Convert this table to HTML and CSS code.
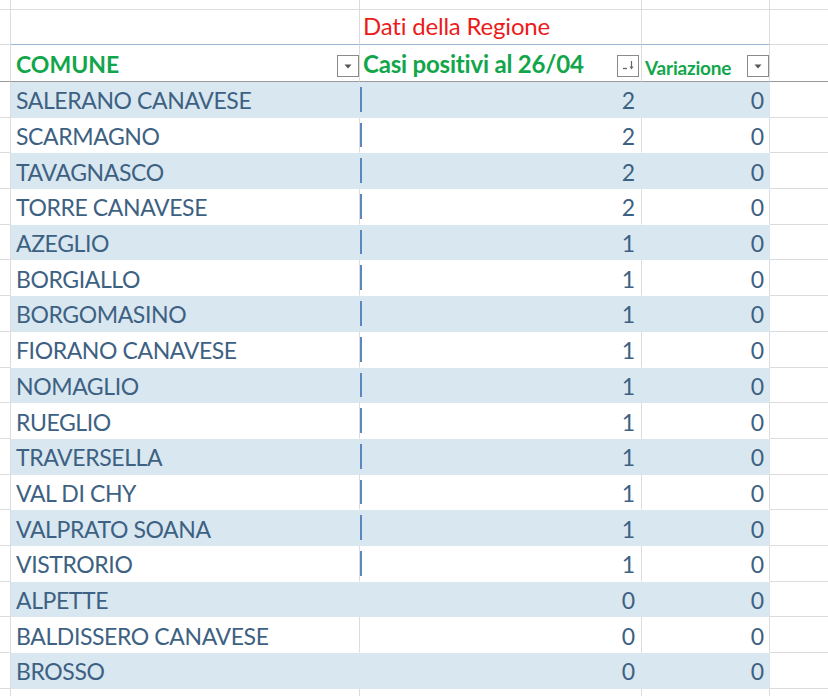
FILE: index.html
```html
<!DOCTYPE html>
<html lang="it">
<head>
<meta charset="utf-8">
<title>Comuni</title>
<link rel="stylesheet" href="styles.css">
</head>
<body>
<div class="sheet">
  <div class="row top">
    <div class="c c0"></div><div class="c ca"></div><div class="c cb"></div><div class="c cc"></div><div class="c cd"></div>
  </div>
  <div class="row title">
    <div class="c c0"></div><div class="c ca"></div>
    <div class="c cb"><span class="red">Dati della Regione</span></div>
    <div class="c cc"></div><div class="c cd"></div>
  </div>
  <div class="row head">
    <div class="c c0"></div>
    <div class="c ca"><span class="h1">COMUNE</span><span class="btn"><svg width="20" height="20" viewBox="0 0 20 20"><path d="M6.5 8.5h7l-3.5 4z" fill="#555"/></svg></span></div>
    <div class="c cb"><span class="h2">Casi positivi al 26/04</span><span class="btn sort"><svg width="20" height="20" viewBox="0 0 20 20"><path d="M5 12.5h4" stroke="#666" stroke-width="1.3" fill="none"/><path d="M13.5 5v7.5" stroke="#666" stroke-width="1.2" fill="none"/><path d="M11.5 10.5l2 3 2-3z" fill="#666"/></svg></span></div>
    <div class="c cc"><span class="h3">Variazione</span><span class="btn"><svg width="20" height="20" viewBox="0 0 20 20"><path d="M6.5 8.5h7l-3.5 4z" fill="#555"/></svg></span></div>
    <div class="c cd"></div>
  </div>

  <div class="row data band"><div class="c c0"></div><div class="c ca">SALERANO CANAVESE</div><div class="c cb"><i class="bar"></i><span>2</span></div><div class="c cc">0</div><div class="c cd"></div></div>
  <div class="row data"><div class="c c0"></div><div class="c ca">SCARMAGNO</div><div class="c cb"><i class="bar"></i><span>2</span></div><div class="c cc">0</div><div class="c cd"></div></div>
  <div class="row data band"><div class="c c0"></div><div class="c ca">TAVAGNASCO</div><div class="c cb"><i class="bar"></i><span>2</span></div><div class="c cc">0</div><div class="c cd"></div></div>
  <div class="row data"><div class="c c0"></div><div class="c ca">TORRE CANAVESE</div><div class="c cb"><i class="bar"></i><span>2</span></div><div class="c cc">0</div><div class="c cd"></div></div>
  <div class="row data band"><div class="c c0"></div><div class="c ca">AZEGLIO</div><div class="c cb"><i class="bar"></i><span>1</span></div><div class="c cc">0</div><div class="c cd"></div></div>
  <div class="row data"><div class="c c0"></div><div class="c ca">BORGIALLO</div><div class="c cb"><i class="bar"></i><span>1</span></div><div class="c cc">0</div><div class="c cd"></div></div>
  <div class="row data band"><div class="c c0"></div><div class="c ca">BORGOMASINO</div><div class="c cb"><i class="bar"></i><span>1</span></div><div class="c cc">0</div><div class="c cd"></div></div>
  <div class="row data"><div class="c c0"></div><div class="c ca">FIORANO CANAVESE</div><div class="c cb"><i class="bar"></i><span>1</span></div><div class="c cc">0</div><div class="c cd"></div></div>
  <div class="row data band"><div class="c c0"></div><div class="c ca">NOMAGLIO</div><div class="c cb"><i class="bar"></i><span>1</span></div><div class="c cc">0</div><div class="c cd"></div></div>
  <div class="row data"><div class="c c0"></div><div class="c ca">RUEGLIO</div><div class="c cb"><i class="bar"></i><span>1</span></div><div class="c cc">0</div><div class="c cd"></div></div>
  <div class="row data band"><div class="c c0"></div><div class="c ca">TRAVERSELLA</div><div class="c cb"><i class="bar"></i><span>1</span></div><div class="c cc">0</div><div class="c cd"></div></div>
  <div class="row data"><div class="c c0"></div><div class="c ca">VAL DI CHY</div><div class="c cb"><i class="bar"></i><span>1</span></div><div class="c cc">0</div><div class="c cd"></div></div>
  <div class="row data band"><div class="c c0"></div><div class="c ca">VALPRATO SOANA</div><div class="c cb"><i class="bar"></i><span>1</span></div><div class="c cc">0</div><div class="c cd"></div></div>
  <div class="row data"><div class="c c0"></div><div class="c ca">VISTRORIO</div><div class="c cb"><i class="bar"></i><span>1</span></div><div class="c cc">0</div><div class="c cd"></div></div>
  <div class="row data band"><div class="c c0"></div><div class="c ca">ALPETTE</div><div class="c cb"><span>0</span></div><div class="c cc">0</div><div class="c cd"></div></div>
  <div class="row data"><div class="c c0"></div><div class="c ca">BALDISSERO CANAVESE</div><div class="c cb"><span>0</span></div><div class="c cc">0</div><div class="c cd"></div></div>
  <div class="row data band"><div class="c c0"></div><div class="c ca">BROSSO</div><div class="c cb"><span>0</span></div><div class="c cc">0</div><div class="c cd"></div></div>
  <div class="row data tail"><div class="c c0"></div><div class="c ca"></div><div class="c cb"></div><div class="c cc"></div><div class="c cd"></div></div>
</div>
</body>
</html>
```

FILE: styles.css
```css
* { box-sizing: border-box; }
html, body { margin: 0; padding: 0; background: #fff; }
body {
  width: 828px;
  height: 696px;
  overflow: hidden;
  font-family: Lato, "Open Sans", sans-serif;
}
.sheet { display: flex; flex-direction: column; }
.row {
  display: grid;
  grid-template-columns: 11px 349px 282px 128px 1fr;
  flex: none;
}
.c {
  border-right: 1px solid #dcdcdc;
  border-bottom: 1px solid #dcdcdc;
  display: flex;
  align-items: flex-end;
  min-width: 0;
  white-space: nowrap;
}
.cd { border-right: none; }

.top { height: 10px; }
.title { height: 35px; }
.title .ca, .title .cb, .title .cc { border-bottom-color: #9cb6d2; }
.title .cb { padding: 0 0 6px 3px; }
.red { color: #ec1b1b; font-size: 24px; line-height: 1; letter-spacing: -0.2px; }

.head { height: 37px; }
.head .c { border-bottom: 1px solid #9a9a9a; }
.head .ca { padding: 0 0 4px 5px; justify-content: space-between; }
.head .cb { padding: 0 2px 4px 3px; justify-content: space-between; }
.head .cc { padding: 0 0 4px 3px; justify-content: space-between; }
.h1 { color: #12a64b; font-weight: 700; font-size: 23px; line-height: 1; padding-bottom: 1px; }
.h2 { color: #12a64b; font-weight: 700; font-size: 24px; line-height: 1; padding-bottom: 1px; letter-spacing: -0.2px; }
.h3 { color: #12a64b; font-weight: 700; font-size: 19px; line-height: 1; padding-bottom: 0; letter-spacing: -0.2px; }
.btn {
  width: 22px;
  height: 22px;
  border: 1px solid #8a8a8a;
  background: #fff;
  display: flex;
  align-items: center;
  justify-content: center;
  flex: none;
}

.data { height: 35.7px; }
.data .c {
  color: #3d6182;
  font-size: 23px;
  line-height: 1;
  align-items: center;
}
.data .ca { padding: 3px 0 0 5px; letter-spacing: -0.4px; }
.data .cb { padding: 3px 6px 0 0; justify-content: flex-end; }
.data .cc { padding: 3px 5px 0 0; justify-content: flex-end; }
.data .ca, .data .cb, .data .cc { border-bottom-color: transparent; }
.band .ca, .band .cb, .band .cc {
  background: #d9e7f1;
  border-right-color: transparent;
}
.bar {
  width: 2px;
  height: calc(100% - 7px);
  background: #5b87c0;
  align-self: center;
  margin-top: -3px;
  margin-right: auto;
}
.tail .ca, .tail .cb, .tail .cc { border-bottom-color: #dcdcdc; }
```
